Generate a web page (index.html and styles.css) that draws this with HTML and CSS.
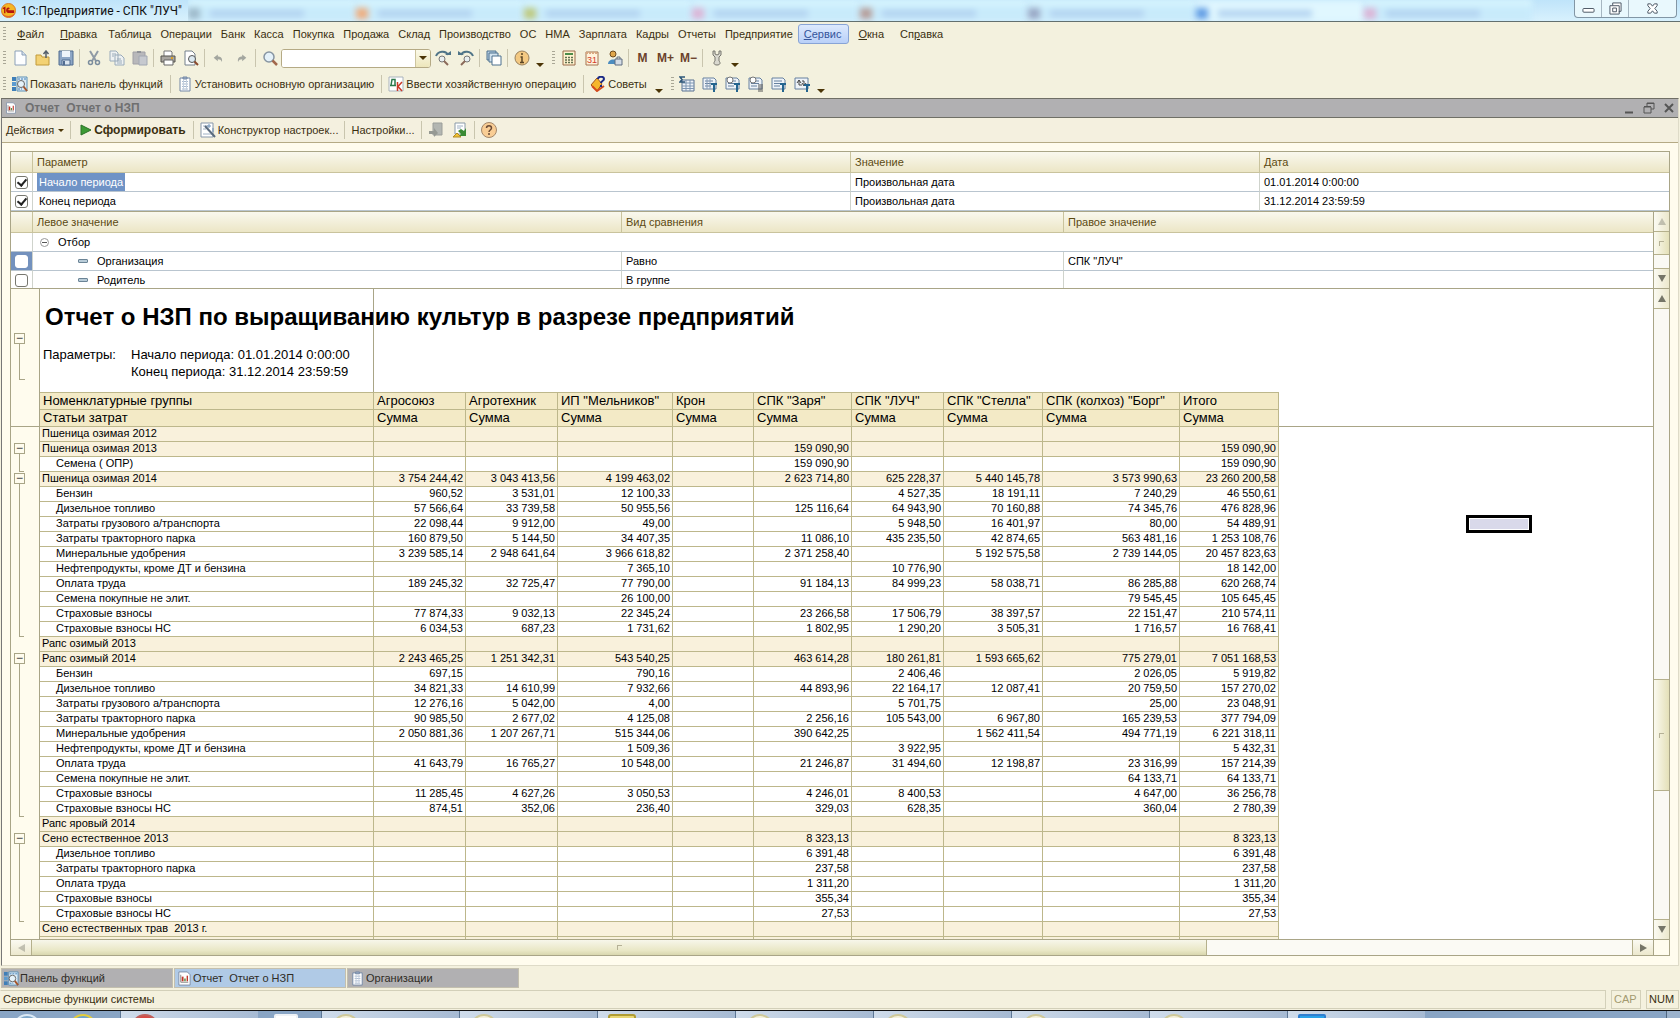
FILE: index.html
```
<!DOCTYPE html>
<html lang="ru">
<head>
    <meta charset="UTF-8">
    <meta name="viewport" content="width=device-width, initial-scale=1.0">
    <title>1С:Предприятие - СПК "ЛУЧ"</title>
    <link rel="stylesheet" href="styles.css">
</head>
<body>
    <!-- Общие значки -->
    <svg class="sprite" xmlns="http://www.w3.org/2000/svg">
        <symbol id="i-panel" viewBox="0 0 16 16">
            <rect x="0" y="1" width="4" height="4" fill="#3f7fb8"/><rect x="0" y="6" width="4" height="4" fill="#5b9bd0"/><rect x="0" y="11" width="4" height="4" fill="#3f7fb8"/>
            <path d="M5 1h10v14H5z" fill="#dcebf5" stroke="#5a8fb5"/><path d="M6 3h8M6 13h4" stroke="#3f7fb8" stroke-dasharray="2 1"/>
            <circle cx="9" cy="8" r="3.5" fill="#e6f3fa" stroke="#666"/><path d="M11.500 10.500L15 15" stroke="#a4552b" stroke-width="2"/>
        </symbol>
        <symbol id="i-list" viewBox="0 0 16 16">
            <path d="M3 2h10v13H3z" fill="#fff" stroke="#7387a5"/><path d="M6 1h4v2H6z" fill="#9fb0c8" stroke="#7387a5"/>
            <path d="M5 5.500h6M5 8h6M5 10.500h6M5 13h6" stroke="#a8b8ce"/><path d="M6.500 4v10M9.500 4v10" stroke="#c4d0df"/>
        </symbol>
        <symbol id="i-report" viewBox="0 0 16 16">
            <path d="M2 1h9l3 3v11H2z" fill="#fff" stroke="#7d8da5"/><path d="M4 4v8h8" stroke="#888" fill="none"/>
            <path d="M6 6v5" stroke="#c0392b" stroke-width="2"/><path d="M8.500 8v3" stroke="#4a8a3c" stroke-width="1.500"/><path d="M11 5v6" stroke="#c0392b" stroke-width="1.500"/>
        </symbol>
        <symbol id="i-findturn" viewBox="0 0 16 16">
            <path d="M1 6C3 1 11 0 13 5" fill="none" stroke="#4f7488" stroke-width="2"/><path d="M10 5h6v-4z" fill="#4f7488"/>
            <circle cx="7" cy="9" r="3" fill="#e8eef0" stroke="#777"/><path d="M9 11l4 4" stroke="#8b6a5a" stroke-width="2"/>
        </symbol>
        <symbol id="i-undo" viewBox="0 0 16 16">
            <path d="M1 7l6-5v3c5 0 7 3 6 8-1-3-3-4-6-4v3z" fill="#a3a69f"/>
        </symbol>
        <symbol id="i-sheet" viewBox="0 0 16 16">
            <path d="M1 2h11l2 2v9H1z" fill="#eef3f8" stroke="#66809f"/><path d="M3 5h8M3 7.500h8M3 10h6" stroke="#66809f"/>
        </symbol>
    </svg>

    <div class="app">
        <header class="titlebar">
            <svg class="logo" viewBox="0 0 16 16"><circle cx="8" cy="8" r="7.500" fill="#f5b723" stroke="#d9772b"/><path d="M1 10c3 5 11 5 14 0l-1 3c-3 3-9 3-12 0z" fill="#e2682b"/><path d="M2 6l2-1v6M9 6c-3-2-4 4-1 4h6M8 7.500c-1 0-1 1 0 1h6" fill="none" stroke="#b3150d" stroke-width="1.500"/></svg>
            <h1>1С:Предприятие - СПК "ЛУЧ"</h1>
            <div class="glass" aria-hidden="true">
                <span class="ghost steel"></span><span class="ghost orange"></span><span class="ghost olive"></span><span class="ghost pink"></span><span class="ghost brown"></span><span class="ghost grey"></span><span class="ghost blue active"></span><span class="ghost pink"></span>
            </div>
            <div class="caption">
                <button aria-label="Свернуть"><svg viewBox="0 0 14 14"><rect x="1" y="7" width="12" height="4" rx="1" fill="#fff" stroke="#44505e"/></svg></button>
                <button aria-label="Восстановить"><svg viewBox="0 0 14 14"><path d="M4 1h9v9h-2v3H1V4h3z" fill="#fff" stroke="#44505e"/><path d="M4 4h7v7M4 6.500h4v4H4z" fill="none" stroke="#44505e"/></svg></button>
                <button class="wide" aria-label="Закрыть"><svg viewBox="0 0 14 14"><path d="M2 2h3l2 2.500L9 2h3v2L9.500 7l2.500 3v2H9L7 9.500 5 12H2v-2l2.500-3L2 4z" fill="#fff" stroke="#44505e"/></svg></button>
            </div>
        </header>

        <nav class="menu">
            <span class="grip"></span>
            <a href="#" class="roomy"><u>Ф</u>айл</a>
            <a href="#" class="roomy"><u>П</u>равка</a>
            <a href="#">Таблица</a>
            <a href="#">Операции</a>
            <a href="#">Банк</a>
            <a href="#">Касса</a>
            <a href="#">Покупка</a>
            <a href="#">Продажа</a>
            <a href="#">Склад</a>
            <a href="#">Производство</a>
            <a href="#">ОС</a>
            <a href="#">НМА</a>
            <a href="#">Зарплата</a>
            <a href="#">Кадры</a>
            <a href="#">Отчеты</a>
            <a href="#">Предприятие</a>
            <a href="#" class="current"><u>С</u>ервис</a>
            <a href="#" class="roomy"><u>О</u>кна</a>
            <a href="#" class="roomy">Сп<u>р</u>авка</a>
        </nav>

        <div class="toolbar">
            <span class="grip"></span>
            <button aria-label="Новый"><svg viewBox="0 0 16 16"><path d="M3 1h7l4 4v10H3z" fill="#fdfeff" stroke="#8ba0b8"/><path d="M10 1v4h4" fill="#d4dfea" stroke="#8ba0b8"/></svg></button>
            <button aria-label="Открыть"><svg viewBox="0 0 16 16"><path d="M1 5h5l1 2h7v8H1z" fill="#f3d274" stroke="#c19a3a"/><path d="M11 8V2M8.500 4L11 1l2.500 3" fill="none" stroke="#55606b" stroke-width="1.500"/></svg></button>
            <button aria-label="Сохранить"><svg viewBox="0 0 16 16"><path d="M1 1h14v14H1z" fill="#8ea7c6" stroke="#516c90"/><path d="M4 1h8v6H4z" fill="#eef4fa"/><path d="M4 10h8v5H4z" fill="#dce6f0" stroke="#516c90"/><path d="M6 11v4" stroke="#516c90" stroke-width="2"/></svg></button>
            <span class="sep"></span>
            <button aria-label="Вырезать"><svg viewBox="0 0 16 16"><path d="M4 1l6 10M12 1L6 11" stroke="#8f9aa5" stroke-width="2"/><circle cx="4.500" cy="12.500" r="2" fill="none" stroke="#7b8d9d" stroke-width="1.500"/><circle cx="11.500" cy="12.500" r="2" fill="none" stroke="#7b8d9d" stroke-width="1.500"/></svg></button>
            <button aria-label="Копировать"><svg viewBox="0 0 16 16"><path d="M1 1h6l2 2v8H1zM6 5h6l3 3v7H6z" fill="#eef1f2" stroke="#9aabba"/><path d="M3 4h4M3 6h2M8 9h4M8 11h5M8 13h5" stroke="#9aabba"/></svg></button>
            <button aria-label="Вставить"><svg viewBox="0 0 16 16"><path d="M1 2h12v12H1z" fill="#b8b8bb" stroke="#a0a0a6"/><path d="M5 1h4v2H5z" fill="#8f9298"/><path d="M7 6h8v9H7z" fill="#c6c9cf" stroke="#a3a8b2"/></svg></button>
            <span class="sep"></span>
            <button aria-label="Печать"><svg viewBox="0 0 16 16"><path d="M4 6V1h7l1 1v4" fill="#fff" stroke="#777"/><path d="M1 6h14v6H1z" fill="#a9a6a0" stroke="#55524d"/><path d="M4 10h9v5H4z" fill="#fff" stroke="#666"/><path d="M11 8h2" stroke="#d6a02c" stroke-width="2"/></svg></button>
            <button aria-label="Просмотр"><svg viewBox="0 0 16 16"><path d="M2 1h7l3 3v11H2z" fill="#fff" stroke="#75808c"/><circle cx="9" cy="9" r="3.500" fill="#dce9f1" stroke="#555"/><path d="M11.500 11.500L15 15" stroke="#8b4a2c" stroke-width="2"/></svg></button>
            <span class="sep"></span>
            <button aria-label="Отменить"><svg class="small" viewBox="0 0 16 16"><use href="#i-undo"/></svg></button>
            <button aria-label="Вернуть"><svg class="small flip" viewBox="0 0 16 16"><use href="#i-undo"/></svg></button>
            <span class="sep"></span>
            <label for="search" aria-label="Найти"><svg viewBox="0 0 16 16"><circle cx="7" cy="7" r="5" fill="#e4f1f9" stroke="#8795a2" stroke-width="1.500"/><path d="M10.500 10.500L15 15" stroke="#a2684c" stroke-width="2.500"/></svg></label>
            <span class="combo"><input type="text" id="search"><button aria-label="Список"><i class="down"></i></button></span>
            <button aria-label="Найти далее"><svg viewBox="0 0 16 16"><use href="#i-findturn"/></svg></button>
            <button aria-label="Найти назад"><svg class="flip" viewBox="0 0 16 16"><use href="#i-findturn"/></svg></button>
            <span class="sep"></span>
            <button aria-label="Окна"><svg viewBox="0 0 16 16"><path d="M1 1h9v9H1z" fill="#b8d0e4" stroke="#4c708e"/><path d="M3 3h9v9H3z" fill="#d3e3ef" stroke="#4c708e"/><path d="M6 6h9v9H6z" fill="#fff" stroke="#4c708e"/></svg></button>
            <span class="sep"></span>
            <button aria-label="Справка"><svg viewBox="0 0 16 16"><circle cx="8" cy="8" r="7" fill="#f3c982" stroke="#98805c"/><path d="M8 3v2M6.500 7H8v5M6 12.500h4" fill="none" stroke="#5a4525" stroke-width="1.500"/></svg></button>
            <i class="down low"></i>
            <span class="grip"></span>
            <button aria-label="Калькулятор"><svg viewBox="0 0 16 16"><path d="M2 1h12v14H2z" fill="#fff3cf" stroke="#9a6a4a"/><path d="M4 3h8v2H4z" fill="#4c8c4a"/><path d="M4 7.500h8M4 10h8M4 12.500h8" stroke="#5f6f4f" stroke-width="1.500" stroke-dasharray="2 1"/></svg></button>
            <button aria-label="Календарь"><svg viewBox="0 0 16 16"><path d="M2 2h12v13H2z" fill="#fff3dc" stroke="#a57350"/><path d="M2 3h12" stroke="#d8a780" stroke-width="2" stroke-dasharray="2 1"/><text x="3" y="13" font-size="9" fill="#d23a2a">31</text></svg></button>
            <button aria-label="Пользователи"><svg viewBox="0 0 16 16"><circle cx="6" cy="4" r="3" fill="#e0a64a" stroke="#6d4a1e"/><path d="M1 14c0-6 10-6 10 0z" fill="#4c8dc0"/><path d="M8 9h7v6H8z" fill="#d5dde6" stroke="#5e6d80"/><path d="M10 9V7h3v2" fill="none" stroke="#5e6d80"/></svg></button>
            <span class="sep"></span>
            <button class="mem">M</button>
            <button class="mem">M+</button>
            <button class="mem">M−</button>
            <span class="sep"></span>
            <button aria-label="Сервис"><svg viewBox="0 0 16 16"><path d="M4 1v4l2 2v4c-2 2-1 4 2 4s4-2 2-4V7l2-2V1l-2 0v3l-2 1-2-1V1z" fill="#d9d8cf" stroke="#77766e"/></svg></button>
            <i class="down low"></i>
        </div>

        <div class="toolbar">
            <span class="grip"></span>
            <button class="text"><svg viewBox="0 0 16 16"><use href="#i-panel"/></svg>Показать панель функций</button>
            <span class="sep"></span>
            <button class="text"><svg viewBox="0 0 16 16"><use href="#i-list"/></svg>Установить основную организацию</button>
            <span class="sep"></span>
            <button class="text"><svg viewBox="0 0 16 16"><path d="M1 1h14v14H1z" fill="#fff" stroke="#a9b3bd"/><path d="M2 9.500h6M3 9.500l1-6h3v6" fill="none" stroke="#2d7a4c" stroke-width="1.500"/><path d="M9.500 6v9M14 6l-4 4.500 4 4.500" fill="none" stroke="#cc3a28" stroke-width="1.500"/></svg>Ввести хозяйственную операцию</button>
            <span class="sep"></span>
            <button class="text"><svg viewBox="0 0 16 16"><path d="M1 9l6-7 5 6-5 7z" fill="#f5b62c" stroke="#a3521c"/><path d="M2 10l5 5 7-5" fill="none" stroke="#d34a1c" stroke-width="2"/><path d="M8 3c0-3 6-3 6 0 0 2-3 2-3 4M11 9v2" fill="none" stroke="#1b2a86" stroke-width="2"/></svg>Советы</button>
            <i class="down low"></i>
            <span class="grip"></span>
            <button aria-label="Итоги"><svg viewBox="0 0 16 16"><path d="M3 4h12v11H3z" fill="#eef3f8" stroke="#58718f"/><path d="M3 7h12M3 10h12M3 12.500h12M7 4v11M11 4v11" stroke="#7f97b3"/><path d="M6 1H1l2 2.500L1 6h5" fill="none" stroke="#2c5578" stroke-width="1.500"/></svg></button>
            <button aria-label="Таблица"><svg viewBox="0 0 16 16"><use href="#i-sheet"/><path d="M5 3v10M8 3v10" stroke="#8aa0ba"/><path d="M9 8h6M12 8v8" stroke="#23648f" stroke-width="2"/></svg></button>
            <button aria-label="Поиск в тексте"><svg viewBox="0 0 16 16"><use href="#i-sheet"/><circle cx="5" cy="4" r="3" fill="#fff" stroke="#777"/><path d="M9 8h6M12 8v8" stroke="#23648f" stroke-width="2"/></svg></button>
            <button aria-label="Поиск в списке"><svg viewBox="0 0 16 16"><use href="#i-sheet"/><circle cx="5" cy="4" r="3" fill="#fff" stroke="#777"/><path d="M10 9h5M10 11h5M10 13h5M10 15h5" stroke="#555"/></svg></button>
            <button aria-label="Текст"><svg viewBox="0 0 16 16"><use href="#i-sheet"/><path d="M9 8h6M12 8v8" stroke="#23648f" stroke-width="2"/></svg></button>
            <button aria-label="Обновить"><svg viewBox="0 0 16 16"><path d="M1 2h13v11H1z" fill="#eef3f8" stroke="#66809f"/><path d="M3 7l2-3 2 3M5 4v5h3M8 7l2 3 2-3M10 9V5H8" fill="none" stroke="#444"/><path d="M10 9h6M13 9v7" stroke="#23648f" stroke-width="2"/></svg></button>
            <i class="down low"></i>
        </div>

        <section class="window">
            <div class="window-title">
                <svg viewBox="0 0 16 16"><use href="#i-report"/></svg>
                <h2>Отчет&nbsp; Отчет о НЗП</h2>
                <button aria-label="Свернуть окно"><svg viewBox="0 0 12 12"><path d="M2 10.500h8" stroke="#555" stroke-width="2"/></svg></button>
                <button aria-label="Восстановить окно"><svg viewBox="0 0 12 12"><path d="M4 4V1h7v6H8M1 5h7v6H1zM1 4.500h7M4 1.500h7" fill="none" stroke="#555"/></svg></button>
                <button aria-label="Закрыть окно"><svg viewBox="0 0 12 12"><path d="M2 2l8 8M10 2l-8 8" stroke="#555" stroke-width="2"/></svg></button>
            </div>

            <div class="actions">
                <button>Действия <i class="down tiny"></i></button>
                <span class="sep"></span>
                <button class="run"><svg viewBox="0 0 12 12"><path d="M1 1l10 5-10 5z" fill="#3c9a34" stroke="#2c7228"/></svg>Сформировать</button>
                <span class="sep"></span>
                <button><svg viewBox="0 0 16 16"><path d="M1 1h12v14H1z" fill="#fff" stroke="#8797aa"/><path d="M3 4h5M3 7h3M3 12h9" stroke="#9fb0c4"/><path d="M5 4l10 11" stroke="#596a7d" stroke-width="2"/><path d="M9 2v4M7 4h4M13 6v4" stroke="#6d8fb5"/></svg>Конструктор настроек...</button>
                <span class="sep"></span>
                <button>Настройки...</button>
                <span class="sep"></span>
                <button aria-label="Восстановить значения"><svg viewBox="0 0 16 16"><path d="M5 1h9v12H5z" fill="#b3b6b2" stroke="#9b9e9a"/><path d="M1 9h5V6l4 5-4 4v-3H1z" fill="#969993"/></svg></button>
                <button aria-label="Сохранить значения"><svg viewBox="0 0 16 16"><path d="M3 1h10v11H3z" fill="#fff" stroke="#8a9aa8"/><path d="M5 4h6M5 6h4" stroke="#9fb0c4"/><path d="M14 6v8H7l2-2-3-3 3-2 3 2z" fill="#3a8b35"/><path d="M1 15l4-4 4 4z" fill="#f0c136" stroke="#b08a22"/></svg></button>
                <span class="sep"></span>
                <button aria-label="Помощь"><svg viewBox="0 0 16 16"><circle cx="8" cy="8" r="7.500" fill="#f9cd94" stroke="#a3876a"/><path d="M5.500 6c0-3 5-3 5 0 0 2-2.500 2-2.500 4M8 11v2" fill="none" stroke="#6a4a35" stroke-width="1.500"/></svg></button>
            </div>

            <div class="content">
                <table class="list params">
                    <colgroup><col class="c-mark"><col><col class="c-value"><col class="c-date"></colgroup>
                    <thead>
                        <tr><th></th><th>Параметр</th><th>Значение</th><th>Дата</th></tr>
                    </thead>
                    <tbody>
                        <tr><td><input type="checkbox" id="p1" checked></td><td><label for="p1" class="picked">Начало периода</label></td><td>Произвольная дата</td><td>01.01.2014 0:00:00</td></tr>
                        <tr><td><input type="checkbox" id="p2" checked></td><td><label for="p2">Конец периода</label></td><td>Произвольная дата</td><td>31.12.2014 23:59:59</td></tr>
                    </tbody>
                </table>

                <div class="filter">
                    <table class="list">
                        <colgroup><col class="c-mark"><col><col class="c-kind"><col class="c-right"></colgroup>
                        <thead>
                            <tr><th></th><th>Левое значение</th><th>Вид сравнения</th><th>Правое значение</th></tr>
                        </thead>
                        <tbody>
                            <tr class="group"><td></td><td colspan="3"><button class="fold" aria-label="Свернуть отбор"></button>Отбор</td></tr>
                            <tr><td class="focus"><input type="checkbox" id="f1"></td><td class="nested"><i class="dash"></i><label for="f1">Организация</label></td><td>Равно</td><td>СПК "ЛУЧ"</td></tr>
                            <tr><td><input type="checkbox" id="f2"></td><td class="nested"><i class="dash"></i><label for="f2">Родитель</label></td><td>В группе</td><td></td></tr>
                        </tbody>
                    </table>
                    <div class="vscroll">
                        <button class="off" aria-label="Вверх"><i class="tri up"></i></button>
                        <div class="track"><span class="thumb short"></span></div>
                        <button aria-label="Вниз"><i class="tri"></i></button>
                    </div>
                </div>

                <div class="report">
                    <div class="sheet">
                        <div class="sheet-head">
                            <div class="head-gutter"><button class="toggle" aria-label="Свернуть шапку">−</button></div>
                            <div class="head-text">
                                <h3>Отчет о НЗП по выращиванию культур в разрезе предприятий</h3>
                                <dl>
                                    <dt>Параметры:</dt>
                                    <dd>Начало периода: 01.01.2014 0:00:00</dd>
                                    <dd>Конец периода: 31.12.2014 23:59:59</dd>
                                </dl>
                            </div>
                        </div>
                        <table class="data">
                            <colgroup><col class="w-tree"><col class="w-name"><col class="w-sum"><col class="w-sum"><col class="w-ip"><col class="w-kron"><col class="w-zarya"><col class="w-sum"><col class="w-stella"><col class="w-borg"><col class="w-stella"><col></colgroup>
                            <thead>
                                <tr><td class="tree"></td><th>Номенклатурные группы</th><th>Агросоюз</th><th>Агротехник</th><th>ИП "Мельников"</th><th>Крон</th><th>СПК "Заря"</th><th>СПК "ЛУЧ"</th><th>СПК "Стелла"</th><th>СПК (колхоз) "Борг"</th><th>Итого</th><td class="rest"></td></tr>
                                <tr><td class="tree last"></td><th>Статьи затрат</th><th>Сумма</th><th>Сумма</th><th>Сумма</th><th>Сумма</th><th>Сумма</th><th>Сумма</th><th>Сумма</th><th>Сумма</th><th>Сумма</th><td class="rest last"></td></tr>
                            </thead>
                            <tbody>
                                <tr class="total"><td class="tree"></td><th>Пшеница озимая 2012</th><td></td><td></td><td></td><td></td><td></td><td></td><td></td><td></td><td></td><td class="rest"></td></tr>
                                <tr class="total"><td class="tree open"><button class="toggle" aria-label="Свернуть">−</button></td><th>Пшеница озимая 2013</th><td></td><td></td><td></td><td></td><td>159 090,90</td><td></td><td></td><td></td><td>159 090,90</td><td class="rest"></td></tr>
                                <tr><td class="tree end"></td><th>Семена ( ОПР)</th><td></td><td></td><td></td><td></td><td>159 090,90</td><td></td><td></td><td></td><td>159 090,90</td><td class="rest"></td></tr>
                                <tr class="total"><td class="tree open"><button class="toggle" aria-label="Свернуть">−</button></td><th>Пшеница озимая 2014</th><td>3 754 244,42</td><td>3 043 413,56</td><td>4 199 463,02</td><td></td><td>2 623 714,80</td><td>625 228,37</td><td>5 440 145,78</td><td>3 573 990,63</td><td>23 260 200,58</td><td class="rest"></td></tr>
                                <tr><td class="tree line"></td><th>Бензин</th><td>960,52</td><td>3 531,01</td><td>12 100,33</td><td></td><td></td><td>4 527,35</td><td>18 191,11</td><td>7 240,29</td><td>46 550,61</td><td class="rest"></td></tr>
                                <tr><td class="tree line"></td><th>Дизельное топливо</th><td>57 566,64</td><td>33 739,58</td><td>50 955,56</td><td></td><td>125 116,64</td><td>64 943,90</td><td>70 160,88</td><td>74 345,76</td><td>476 828,96</td><td class="rest"></td></tr>
                                <tr><td class="tree line"></td><th>Затраты грузового а/транспорта</th><td>22 098,44</td><td>9 912,00</td><td>49,00</td><td></td><td></td><td>5 948,50</td><td>16 401,97</td><td>80,00</td><td>54 489,91</td><td class="rest"></td></tr>
                                <tr><td class="tree line"></td><th>Затраты тракторного парка</th><td>160 879,50</td><td>5 144,50</td><td>34 407,35</td><td></td><td>11 086,10</td><td>435 235,50</td><td>42 874,65</td><td>563 481,16</td><td>1 253 108,76</td><td class="rest"></td></tr>
                                <tr><td class="tree line"></td><th>Минеральные удобрения</th><td>3 239 585,14</td><td>2 948 641,64</td><td>3 966 618,82</td><td></td><td>2 371 258,40</td><td></td><td>5 192 575,58</td><td>2 739 144,05</td><td>20 457 823,63</td><td class="rest"></td></tr>
                                <tr><td class="tree line"></td><th>Нефтепродукты, кроме ДТ и бензина</th><td></td><td></td><td>7 365,10</td><td></td><td></td><td>10 776,90</td><td></td><td></td><td>18 142,00</td><td class="rest"></td></tr>
                                <tr><td class="tree line"></td><th>Оплата труда</th><td>189 245,32</td><td>32 725,47</td><td>77 790,00</td><td></td><td>91 184,13</td><td>84 999,23</td><td>58 038,71</td><td>86 285,88</td><td>620 268,74</td><td class="rest"></td></tr>
                                <tr><td class="tree line"></td><th>Семена покупные не элит.</th><td></td><td></td><td>26 100,00</td><td></td><td></td><td></td><td></td><td>79 545,45</td><td>105 645,45</td><td class="rest"></td></tr>
                                <tr><td class="tree line"></td><th>Страховые взносы</th><td>77 874,33</td><td>9 032,13</td><td>22 345,24</td><td></td><td>23 266,58</td><td>17 506,79</td><td>38 397,57</td><td>22 151,47</td><td>210 574,11</td><td class="rest"></td></tr>
                                <tr><td class="tree end"></td><th>Страховые взносы НС</th><td>6 034,53</td><td>687,23</td><td>1 731,62</td><td></td><td>1 802,95</td><td>1 290,20</td><td>3 505,31</td><td>1 716,57</td><td>16 768,41</td><td class="rest"></td></tr>
                                <tr class="total"><td class="tree"></td><th>Рапс озимый 2013</th><td></td><td></td><td></td><td></td><td></td><td></td><td></td><td></td><td></td><td class="rest"></td></tr>
                                <tr class="total"><td class="tree open"><button class="toggle" aria-label="Свернуть">−</button></td><th>Рапс озимый 2014</th><td>2 243 465,25</td><td>1 251 342,31</td><td>543 540,25</td><td></td><td>463 614,28</td><td>180 261,81</td><td>1 593 665,62</td><td>775 279,01</td><td>7 051 168,53</td><td class="rest"></td></tr>
                                <tr><td class="tree line"></td><th>Бензин</th><td>697,15</td><td></td><td>790,16</td><td></td><td></td><td>2 406,46</td><td></td><td>2 026,05</td><td>5 919,82</td><td class="rest"></td></tr>
                                <tr><td class="tree line"></td><th>Дизельное топливо</th><td>34 821,33</td><td>14 610,99</td><td>7 932,66</td><td></td><td>44 893,96</td><td>22 164,17</td><td>12 087,41</td><td>20 759,50</td><td>157 270,02</td><td class="rest"></td></tr>
                                <tr><td class="tree line"></td><th>Затраты грузового а/транспорта</th><td>12 276,16</td><td>5 042,00</td><td>4,00</td><td></td><td></td><td>5 701,75</td><td></td><td>25,00</td><td>23 048,91</td><td class="rest"></td></tr>
                                <tr><td class="tree line"></td><th>Затраты тракторного парка</th><td>90 985,50</td><td>2 677,02</td><td>4 125,08</td><td></td><td>2 256,16</td><td>105 543,00</td><td>6 967,80</td><td>165 239,53</td><td>377 794,09</td><td class="rest"></td></tr>
                                <tr><td class="tree line"></td><th>Минеральные удобрения</th><td>2 050 881,36</td><td>1 207 267,71</td><td>515 344,06</td><td></td><td>390 642,25</td><td></td><td>1 562 411,54</td><td>494 771,19</td><td>6 221 318,11</td><td class="rest"></td></tr>
                                <tr><td class="tree line"></td><th>Нефтепродукты, кроме ДТ и бензина</th><td></td><td></td><td>1 509,36</td><td></td><td></td><td>3 922,95</td><td></td><td></td><td>5 432,31</td><td class="rest"></td></tr>
                                <tr><td class="tree line"></td><th>Оплата труда</th><td>41 643,79</td><td>16 765,27</td><td>10 548,00</td><td></td><td>21 246,87</td><td>31 494,60</td><td>12 198,87</td><td>23 316,99</td><td>157 214,39</td><td class="rest"></td></tr>
                                <tr><td class="tree line"></td><th>Семена покупные не элит.</th><td></td><td></td><td></td><td></td><td></td><td></td><td></td><td>64 133,71</td><td>64 133,71</td><td class="rest"></td></tr>
                                <tr><td class="tree line"></td><th>Страховые взносы</th><td>11 285,45</td><td>4 627,26</td><td>3 050,53</td><td></td><td>4 246,01</td><td>8 400,53</td><td></td><td>4 647,00</td><td>36 256,78</td><td class="rest"></td></tr>
                                <tr><td class="tree end"></td><th>Страховые взносы НС</th><td>874,51</td><td>352,06</td><td>236,40</td><td></td><td>329,03</td><td>628,35</td><td></td><td>360,04</td><td>2 780,39</td><td class="rest"></td></tr>
                                <tr class="total"><td class="tree"></td><th>Рапс яровый 2014</th><td></td><td></td><td></td><td></td><td></td><td></td><td></td><td></td><td></td><td class="rest"></td></tr>
                                <tr class="total"><td class="tree open"><button class="toggle" aria-label="Свернуть">−</button></td><th>Сено естественное 2013</th><td></td><td></td><td></td><td></td><td>8 323,13</td><td></td><td></td><td></td><td>8 323,13</td><td class="rest"></td></tr>
                                <tr><td class="tree line"></td><th>Дизельное топливо</th><td></td><td></td><td></td><td></td><td>6 391,48</td><td></td><td></td><td></td><td>6 391,48</td><td class="rest"></td></tr>
                                <tr><td class="tree line"></td><th>Затраты тракторного парка</th><td></td><td></td><td></td><td></td><td>237,58</td><td></td><td></td><td></td><td>237,58</td><td class="rest"></td></tr>
                                <tr><td class="tree line"></td><th>Оплата труда</th><td></td><td></td><td></td><td></td><td>1 311,20</td><td></td><td></td><td></td><td>1 311,20</td><td class="rest"></td></tr>
                                <tr><td class="tree line"></td><th>Страховые взносы</th><td></td><td></td><td></td><td></td><td>355,34</td><td></td><td></td><td></td><td>355,34</td><td class="rest"></td></tr>
                                <tr><td class="tree end"></td><th>Страховые взносы НС</th><td></td><td></td><td></td><td></td><td>27,53</td><td></td><td></td><td></td><td>27,53</td><td class="rest"></td></tr>
                                <tr class="total"><td class="tree"></td><th>Сено естественных трав&nbsp; 2013 г.</th><td></td><td></td><td></td><td></td><td></td><td></td><td></td><td></td><td></td><td class="rest"></td></tr>
                                <tr class="total"><td class="tree"></td><th></th><td></td><td></td><td></td><td></td><td></td><td></td><td></td><td></td><td></td><td class="rest"></td></tr>
                            </tbody>
                        </table>
                        <span class="cell-cursor"></span>
                    </div>
                    <div class="vscroll">
                        <button aria-label="Вверх"><i class="tri up"></i></button>
                        <div class="track low"><span class="thumb"></span></div>
                        <button aria-label="Вниз"><i class="tri"></i></button>
                    </div>
                    <div class="hscroll">
                        <button class="off" aria-label="Влево"><i class="tri left"></i></button>
                        <div class="track"><span class="thumb"></span></div>
                        <button aria-label="Вправо"><i class="tri right"></i></button>
                    </div>
                    <div class="corner"></div>
                </div>
            </div>
        </section>

        <div class="windows">
            <button><svg viewBox="0 0 16 16"><use href="#i-panel"/></svg>Панель функций</button>
            <button class="active"><svg viewBox="0 0 16 16"><use href="#i-report"/></svg>Отчет&nbsp; Отчет о НЗП</button>
            <button><svg viewBox="0 0 16 16"><use href="#i-list"/></svg>Организации</button>
        </div>

        <footer class="status">
            <span class="hint">Сервисные функции системы</span>
            <span class="key off">CAP</span>
            <span class="key">NUM</span>
        </footer>

        <div class="taskbar" aria-hidden="true">
            <span class="start"><i class="orb"></i><i class="ie"></i></span>
            <span class="task"><i class="red"></i></span>
            <span class="plain"><i class="paper"></i></span>
            <span class="task"><i></i></span>
            <span class="task"><i></i></span>
            <span class="task"><i class="book"></i></span>
            <span class="task"><i></i></span>
            <span class="task"><i></i></span>
            <span class="task"><i></i></span>
            <span class="task"><i></i></span>
            <span class="task"><i class="azure"></i></span>
            <span class="desk"></span>
        </div>
    </div>
</body>
</html>
```
FILE: styles.css
```
* {
    box-sizing: border-box;
}

body {
    margin: 0;
    font-family: "Liberation Sans", Arial, sans-serif;
    font-size: 11px;
    color: #3a2f10;
    background-color: #f4f1de;
}

button {
    font: inherit;
    color: inherit;
    background: none;
    border: none;
    padding: 0;
    margin: 0;
    display: flex;
    align-items: center;
    justify-content: center;
    white-space: nowrap;
}

h1, h2, h3, dl, dd {
    margin: 0;
    font-weight: normal;
}

svg {
    display: block;
    flex: none;
    width: 16px;
    height: 16px;
}

.sprite {
    position: absolute;
    width: 0;
    height: 0;
}

.app {
    display: flex;
    flex-direction: column;
    height: 100vh;
    overflow: hidden;
}

/* Заголовок приложения */
.titlebar {
    display: flex;
    align-items: center;
    height: 22px;
    flex: none;
    background: linear-gradient(#bfe4fa, #d8f1fd);
    border-bottom: 1px solid #62706f;
}

.logo {
    width: 15px;
    height: 15px;
    margin-left: 1px;
}

.titlebar h1 {
    width: 162px;
    margin: 0 5px;
    font-family: Roboto, sans-serif;
    font-size: 12px;
    color: #111;
    white-space: nowrap;
}

.glass {
    display: flex;
    flex: 1;
    height: 21px;
    overflow: hidden;
}

.ghost {
    display: flex;
    align-items: center;
    gap: 10px;
    flex: none;
    width: 168px;
    padding-top: 5px;
    filter: blur(3px);
    background: linear-gradient(#dcf8ff 15%, #c9ecfc 30%, #c8eafb);
    color: #9db8c9;
}

.ghost::before {
    content: "";
    width: 12px;
    height: 11px;
    background-color: currentColor;
}

.ghost::after {
    content: "";
    width: 94px;
    height: 7px;
    background-color: #b2d2f0;
}

.ghost.active {
    background: #e0f7ff;
}

.steel { color: #9db8c9; }
.orange { color: #efac7c; }
.olive { color: #bec97e; }
.pink { color: #dcb4d6; }
.brown { color: #b59c98; }
.grey { color: #98a6c4; }
.blue { color: #5f9be4; }

.caption {
    display: flex;
    height: 18px;
    margin-right: 3px;
    align-self: flex-start;
    background-color: #e9f8fd;
    border: 1px solid #8296a5;
    border-top: none;
    border-radius: 0 0 4px 4px;
}

.caption button {
    width: 27px;
    border-right: 1px solid #a6b6c1;
}

.caption .wide {
    width: 47px;
    border-right: none;
}

.caption svg {
    width: 13px;
    height: 13px;
}

/* Меню и панели инструментов */
.menu, .toolbar {
    display: flex;
    align-items: center;
    flex: none;
    padding-left: 3px;
    background-color: #f3f1de;
}

.menu {
    height: 23px;
}

.menu a {
    padding: 2px 5px 2px 4px;
    color: inherit;
    line-height: 14px;
    text-decoration: none;
}

.menu .roomy {
    padding: 2px 7px 2px 9px;
}

.menu .current {
    padding: 2px 7px 2px 5px;
    color: #34549a;
    background: linear-gradient(#dce9fd, #b9d0f8);
    border: 1px solid #88a4d6;
    border-radius: 3px;
}

.grip {
    width: 3px;
    height: 14px;
    margin-right: 2px;
    background: repeating-linear-gradient(#a9a796 0 1px, transparent 1px 3px);
}

.toolbar {
    height: 26px;
}

.toolbar button, .toolbar label {
    min-width: 23px;
    height: 22px;
    gap: 2px;
}

.toolbar label {
    display: flex;
    align-items: center;
    justify-content: center;
}

.toolbar .text {
    padding: 0 5px 0 4px;
}

.sep {
    width: 1px;
    height: 18px;
    margin: 0 2px;
    background-color: #c9c5ae;
}

svg.small {
    width: 11px;
    height: 11px;
}

.flip {
    transform: scaleX(-1);
}

.combo {
    display: flex;
    width: 150px;
    height: 19px;
    border: 1px solid #b5aa85;
    border-radius: 3px;
    background-color: #fff;
    overflow: hidden;
}

.combo input {
    flex: 1;
    min-width: 0;
    border: none;
    outline: none;
}

.toolbar .combo button {
    min-width: 15px;
    height: 17px;
    border-left: 1px solid #cdc5a0;
    background: linear-gradient(#fbfae9, #ede6bb);
}

.down {
    display: block;
    width: 0;
    height: 0;
    border: 4px solid transparent;
    border-top-color: #4b3506;
    border-bottom: none;
}

.down.low {
    align-self: flex-end;
    margin: 0 8px 4px 3px;
}

.down.tiny {
    border-width: 3px;
    border-bottom: none;
    margin-left: 2px;
}

.toolbar .mem {
    font-size: 12px;
    font-weight: bold;
    color: #6b412b;
}

/* Окно отчета */
.window {
    display: flex;
    flex-direction: column;
    flex: 1;
    min-height: 0;
    margin: 1px 1px 2px;
    border: 1px solid #dedbc8;
    border-left-color: #777;
    border-top-color: #6f6f66;
    background-color: #fffcee;
}

.window-title {
    display: flex;
    align-items: center;
    height: 19px;
    flex: none;
    padding: 0 3px;
    gap: 8px;
    background-color: #b1b0b2;
    border-bottom: 1px solid #6f6f66;
}

.window-title svg {
    width: 12px;
    height: 12px;
}

.window-title h2 {
    flex: 1;
    font-size: 12px;
    font-weight: bold;
    color: #6f6f70;
}

.actions {
    display: flex;
    align-items: center;
    height: 25px;
    flex: none;
    background-color: #f4f0df;
    border-bottom: 1px solid #b5aa85;
}

.actions button {
    gap: 2px;
    padding: 0 4px;
}

.actions .run {
    padding: 0 5px 0 7px;
    font-size: 12px;
    font-weight: bold;
}

.run svg {
    width: 12px;
    height: 12px;
}

.content {
    display: flex;
    flex-direction: column;
    flex: 1;
    min-height: 0;
    margin: 8px 8px 9px;
    border: 1px solid #a9a587;
    background-color: #fff;
}

/* Списки параметров и отбора */
.list {
    width: 100%;
    table-layout: fixed;
    border-collapse: separate;
    border-spacing: 0;
    color: #000;
}

.list th, .list td {
    height: 19px;
    padding: 0 4px;
    border-right: 1px solid #cfd3cc;
    border-bottom: 1px solid #b9c5cf;
    text-align: left;
    font-weight: normal;
    line-height: 16px;
    white-space: nowrap;
}

.list th {
    height: 21px;
    color: #5c4a12;
    background: linear-gradient(#f9f8ee, #ece6c6);
    border-color: #c9c39d;
}

.list th:last-child, .list td:last-child {
    border-right: none;
}

.list td:first-child {
    padding: 0 3px;
}

.c-mark { width: 22px; }
.c-value { width: 409px; }
.c-date { width: 409px; }
.c-kind { width: 442px; }
.c-right { width: 589px; }

.list input {
    appearance: none;
    display: block;
    width: 13px;
    height: 13px;
    margin: 0 auto;
    border: 1px solid #77776f;
    border-radius: 3px;
    background-color: #fff;
}

.list input:checked::after {
    content: "";
    display: block;
    width: 4px;
    height: 7px;
    margin: 0 0 0 3px;
    border: solid #222;
    border-width: 0 2px 2px 0;
    transform: rotate(40deg);
}

.list td:nth-child(2) label {
    display: inline-block;
    padding: 0 2px;
}

.list td .picked {
    color: #fff;
    background-color: #6f93c6;
    line-height: 18px;
}

.list td.focus {
    background-color: #7391bd;
}

.list .focus input {
    border-color: #fff;
}

.filter {
    display: flex;
    flex: none;
    height: 78px;
    overflow: hidden;
    border-top: 1px solid #a9a587;
    border-bottom: 1px solid #a9a587;
}

.filter .list {
    flex: 1;
    align-self: flex-start;
}

.fold {
    display: inline-flex;
    width: 9px;
    height: 9px;
    margin: 0 9px 2px 3px;
    border: 1px solid #999;
    border-radius: 50%;
    vertical-align: middle;
}

.fold::before {
    content: "";
    width: 5px;
    height: 1px;
    background-color: #555;
}

.nested .dash {
    display: inline-block;
    width: 10px;
    height: 4px;
    margin: 0 7px 2px 41px;
    border: 1px solid #6b8496;
    border-radius: 1px;
    background-color: #b9ccd8;
    vertical-align: middle;
}

/* Полосы прокрутки */
.vscroll {
    display: flex;
    flex-direction: column;
    width: 16px;
    flex: none;
    border-left: 1px solid #a9a587;
    background-color: #faf9f4;
}

.vscroll button {
    height: 20px;
    background: linear-gradient(90deg, #fbfaf2, #ece8cd);
    border-bottom: 1px solid #b5b08c;
}

.vscroll button:last-child {
    border-top: 1px solid #b5b08c;
    border-bottom: none;
}

.track {
    display: flex;
    flex: 1;
}

.track.low {
    flex-direction: column;
}

.track.low::before {
    content: "";
    flex: 371;
}

.track.low::after {
    content: "";
    flex: 128;
}

.thumb {
    display: flex;
    align-items: center;
    justify-content: center;
    background: linear-gradient(90deg, #fbfaf0, #e4e0b8);
}

.thumb::after {
    content: "";
    width: 4px;
    height: 4px;
    border: solid #b5b196;
    border-width: 1px 0 0 1px;
}

.vscroll .thumb {
    flex: 110;
    border: solid #b5b08c;
    border-width: 1px 0;
}

.vscroll .short {
    height: 23px;
    border-top: none;
}

.tri {
    width: 0;
    height: 0;
    border: 4px solid transparent;
    border-top: 7px solid #757568;
    border-bottom: none;
}

.tri.up {
    border-top: none;
    border-bottom: 7px solid #757568;
}

.tri.left {
    border: 4px solid transparent;
    border-right: 7px solid #757568;
    border-left: none;
}

.tri.right {
    border: 4px solid transparent;
    border-left: 7px solid #757568;
    border-right: none;
}

.off .tri {
    opacity: 0.4;
}

.hscroll {
    display: flex;
    border-top: 1px solid #a9a587;
    background-color: #fbfaf4;
}

.hscroll button {
    width: 21px;
    background: linear-gradient(#fbfaf2, #ece8cd);
    border-right: 1px solid #b5b08c;
}

.hscroll button:last-child {
    border-left: 1px solid #b5b08c;
    border-right: none;
}

.hscroll .thumb {
    flex: 47;
    background: linear-gradient(#f7f6ea, #e9e7c5 70%, #d9d7ae);
    border-right: 1px solid #b5b08c;
}

.hscroll .track::after {
    content: "";
    flex: 17;
}

.corner {
    border: solid #a9a587;
    border-width: 1px 0 0 1px;
    background-color: #fffcee;
}

/* Табличный документ */
.report {
    display: grid;
    grid-template-columns: minmax(0, 1fr) 16px;
    grid-template-rows: minmax(0, 1fr) 16px;
    flex: 1;
    min-height: 0;
}

.sheet {
    position: relative;
    overflow: hidden;
    color: #000;
}

.sheet-head {
    display: flex;
    height: 103px;
}

.head-gutter {
    width: 29px;
    flex: none;
    padding: 44px 0 0 3px;
    background-color: #fffcee;
    border-right: 1px solid #a9a587;
}

.head-gutter::after {
    content: "";
    display: block;
    width: 5px;
    height: 35px;
    margin-left: 5px;
    border: solid #a9a587;
    border-width: 0 0 1px 1px;
}

.head-text {
    flex: 1;
    padding: 14px 0 0 3px;
    background: linear-gradient(#a9a587, #a9a587) 333px 0 / 1px 100% no-repeat;
}

.head-text h3 {
    font-size: 24px;
    font-weight: bold;
    line-height: 28px;
    padding-left: 2px;
    white-space: nowrap;
}

.head-text dl {
    display: grid;
    grid-template-columns: 88px auto;
    margin-top: 15px;
    font-size: 13px;
    line-height: 17px;
}

.head-text dd {
    grid-column: 2;
}

.head-text dt + dd {
    grid-row: 1;
}

.toggle {
    width: 11px;
    height: 11px;
    border: 1px solid #a9a587;
    background-color: #fffcee;
    font-size: 12px;
    line-height: 9px;
    color: #333;
}

.data {
    width: 100%;
    table-layout: fixed;
    border-collapse: separate;
    border-spacing: 0;
}

.w-tree { width: 29px; }
.w-name { width: 334px; }
.w-sum { width: 92px; }
.w-ip { width: 115px; }
.w-kron { width: 81px; }
.w-zarya { width: 98px; }
.w-stella { width: 99px; }
.w-borg { width: 137px; }

.data th, .data td {
    height: 15px;
    padding: 0 2px;
    border-right: 1px solid #bdb78b;
    border-bottom: 1px solid #bdb78b;
    line-height: 13px;
    text-align: right;
    font-weight: normal;
    white-space: nowrap;
    vertical-align: top;
}

.data th {
    padding-left: 16px;
    text-align: left;
}

.data thead th {
    height: 17px;
    padding: 0 3px;
    font-size: 13px;
    line-height: 16px;
    background-color: #f3eac6;
}

.data thead tr:first-child th {
    height: 18px;
    border-top: 1px solid #bdb78b;
}

.data .total {
    background-color: #f9f1dc;
}

.data .total th {
    padding-left: 2px;
}

.data .tree {
    padding: 1px 0 0 3px;
    border-bottom: none;
    border-right-color: #a9a587;
    background: #fffcee 8px 0 / 1px 100% no-repeat;
}

.data .open, .data .line, .data .end {
    background-image: linear-gradient(#a9a587, #a9a587);
}

.data .open {
    background-position: 8px 8px;
}

.data .end {
    background-image: linear-gradient(#a9a587, #a9a587), linear-gradient(#a9a587, #a9a587);
    background-position: 8px 0, 8px 14px;
    background-size: 1px 100%, 5px 1px;
}

.data .rest {
    border: none;
    background-color: #fff;
}

.data .last {
    border-bottom: 1px solid #a9a587;
}

/* Рамка текущей ячейки лежит поверх таблицы */
.cell-cursor {
    position: absolute;
    left: 1455px;
    top: 226px;
    width: 66px;
    height: 18px;
    border: 3px solid #000;
    background-color: #d9d9ea;
    box-shadow: inset 0 0 0 1px #fff;
}

/* Список окон и строка состояния */
.windows {
    display: flex;
    align-items: flex-start;
    gap: 1px;
    flex: none;
    height: 22px;
    padding: 0 1px;
}

.windows button {
    width: 172px;
    height: 20px;
    justify-content: flex-start;
    gap: 1px;
    padding-left: 2px;
    border: 1px solid #c3bfae;
    background-color: #b1b0b2;
    color: #2f2c26;
}

.windows svg {
    width: 15px;
    height: 15px;
}

.windows .active {
    background-color: #b0cae6;
}

.status {
    display: flex;
    gap: 5px;
    flex: none;
    height: 20px;
    padding-right: 1px;
    line-height: 17px;
}

.status span {
    height: 19px;
    padding: 0 2px;
    border: 1px solid #d3d0b9;
    border-left-color: transparent;
}

.status .hint {
    flex: 1;
}

.status .key {
    width: 30px;
    border-color: #d3d0b9;
}

.status .key:last-child {
    width: 33px;
}

.status .key.off {
    color: #a39a70;
}

.taskbar {
    display: flex;
    flex: none;
    height: 8px;
    overflow: hidden;
    border-top: 1px solid #111;
    background-color: #89a5c5;
}

.taskbar span {
    display: flex;
    flex: none;
    height: 40px;
}

.taskbar i {
    width: 28px;
    height: 28px;
    margin: 3px 0 0 10px;
    border-radius: 50%;
    border: 2px solid #cfc99a;
    background-color: #f4f1dc;
}

.start { width: 120px; }
.plain { width: 63px; }

.task {
    width: 138px;
    border-left: 1px solid #5c7694;
    background: linear-gradient(90deg, #cfdceb, #a6bad3);
}

.taskbar .orb {
    background-color: #7fa8cb;
    border-color: #dbe9f5;
    margin-left: 13px;
}

.taskbar .ie {
    border-color: #e3cd3c;
    background-color: #6fa5cf;
    margin-left: 28px;
}

.taskbar .red { background-color: #d84a45; border-color: #c0605c; }
.taskbar .paper { border-radius: 2px; border-color: #eef2f6; background-color: #fff; width: 24px; margin-left: 16px; }
.taskbar .book { border-radius: 3px; border-color: #b09c33; background-color: #e8d774; }
.taskbar .azure { border-radius: 2px; border-color: #2f7fd0; background-color: #2aa2e8; }

.taskbar .desk {
    width: 14px;
    margin-left: auto;
    border-left: 1px solid #4f6680;
    background-color: #9bb2cc;
}
```
